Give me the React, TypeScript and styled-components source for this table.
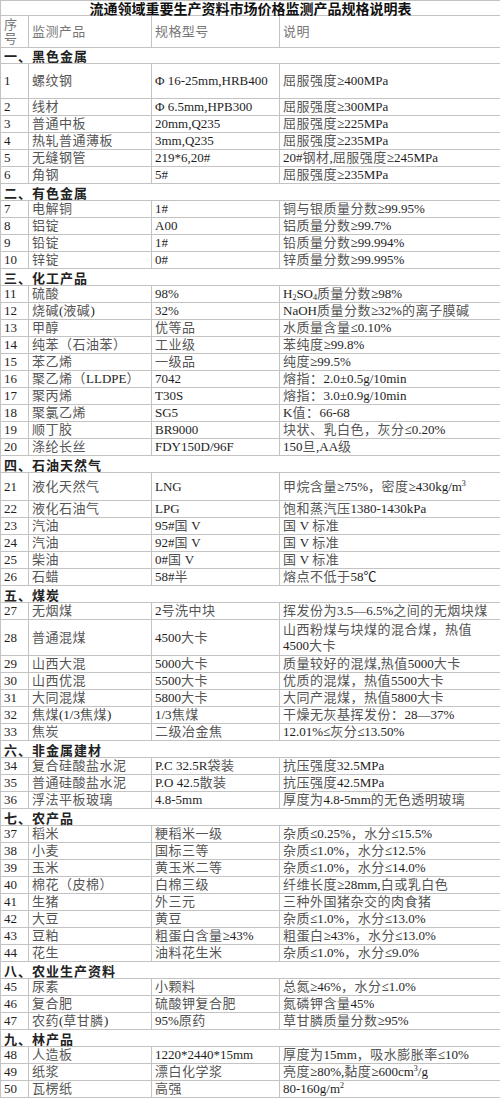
import React, { ReactNode } from 'react';
import styled, { createGlobalStyle } from 'styled-components';

const GlobalStyle = createGlobalStyle`
  html, body {
    margin: 0;
    padding: 0;
    background: #fff;
  }
  body {
    font-family: "Liberation Serif", "Noto Sans CJK SC", serif;
  }
`;

type Section = { section: string };
type Product = { n: number; name: string; spec: ReactNode; desc: ReactNode; h?: number };
type Item = Section | Product;

// CJK runs look lighter and a little more open than the Latin text
const Han = styled.span`
  color: #555;
  letter-spacing: 0.5px;
`;

const Sub = styled.sub`
  font-size: 8px;
  line-height: 0;
  vertical-align: -2px;
`;

const Sup = styled.sup`
  font-size: 8px;
  line-height: 0;
  vertical-align: 5px;
`;

const HAN_RE = /([\u3000-\u303f\u4e00-\u9fff\uff00-\uffef]+)/;

const t = (s: string): ReactNode =>
  s.split(HAN_RE).map((part, i) => (i % 2 === 1 ? <Han key={i}>{part}</Han> : part));

const items: Item[] = [
  { section: '一、黑色金属' },
  { n: 1, name: '螺纹钢', spec: 'Φ 16-25mm,HRB400', desc: '屈服强度≥400MPa', h: 35 },
  { n: 2, name: '线材', spec: 'Φ 6.5mm,HPB300', desc: '屈服强度≥300MPa' },
  { n: 3, name: '普通中板', spec: '20mm,Q235', desc: '屈服强度≥225MPa' },
  { n: 4, name: '热轧普通薄板', spec: '3mm,Q235', desc: '屈服强度≥235MPa' },
  { n: 5, name: '无缝钢管', spec: '219*6,20#', desc: '20#钢材,屈服强度≥245MPa' },
  { n: 6, name: '角钢', spec: '5#', desc: '屈服强度≥235MPa' },
  { section: '二、有色金属' },
  { n: 7, name: '电解铜', spec: '1#', desc: '铜与银质量分数≥99.95%' },
  { n: 8, name: '铝锭', spec: 'A00', desc: '铝质量分数≥99.7%' },
  { n: 9, name: '铅锭', spec: '1#', desc: '铅质量分数≥99.994%' },
  { n: 10, name: '锌锭', spec: '0#', desc: '锌质量分数≥99.995%' },
  { section: '三、化工产品' },
  { n: 11, name: '硫酸', spec: '98%', desc: <>H<Sub>2</Sub>SO<Sub>4</Sub>{t('质量分数≥98%')}</> },
  { n: 12, name: '烧碱(液碱)', spec: '32%', desc: 'NaOH质量分数≥32%的离子膜碱' },
  { n: 13, name: '甲醇', spec: '优等品', desc: '水质量含量≤0.10%' },
  { n: 14, name: '纯苯（石油苯）', spec: '工业级', desc: '苯纯度≥99.8%' },
  { n: 15, name: '苯乙烯', spec: '一级品', desc: '纯度≥99.5%' },
  { n: 16, name: '聚乙烯（LLDPE）', spec: '7042', desc: '熔指：2.0±0.5g/10min' },
  { n: 17, name: '聚丙烯', spec: 'T30S', desc: '熔指：3.0±0.9g/10min' },
  { n: 18, name: '聚氯乙烯', spec: 'SG5', desc: 'K值：66-68' },
  { n: 19, name: '顺丁胶', spec: 'BR9000', desc: '块状、乳白色，灰分≤0.20%' },
  { n: 20, name: '涤纶长丝', spec: 'FDY150D/96F', desc: '150旦,AA级' },
  { section: '四、石油天然气' },
  { n: 21, name: '液化天然气', spec: 'LNG', desc: <>{t('甲烷含量≥75%，密度≥430kg/m')}<Sup>3</Sup></>, h: 28 },
  { n: 22, name: '液化石油气', spec: 'LPG', desc: '饱和蒸汽压1380-1430kPa' },
  { n: 23, name: '汽油', spec: '95#国 V', desc: '国 V 标准' },
  { n: 24, name: '汽油', spec: '92#国 V', desc: '国 V 标准' },
  { n: 25, name: '柴油', spec: '0#国 V', desc: '国 V 标准' },
  { n: 26, name: '石蜡', spec: '58#半', desc: '熔点不低于58℃' },
  { section: '五、煤炭' },
  { n: 27, name: '无烟煤', spec: '2号洗中块', desc: '挥发份为3.5—6.5%之间的无烟块煤' },
  { n: 28, name: '普通混煤', spec: '4500大卡', desc: <>{t('山西粉煤与块煤的混合煤，热值')}<br />{t('4500大卡')}</>, h: 36 },
  { n: 29, name: '山西大混', spec: '5000大卡', desc: '质量较好的混煤,热值5000大卡' },
  { n: 30, name: '山西优混', spec: '5500大卡', desc: '优质的混煤，热值5500大卡' },
  { n: 31, name: '大同混煤', spec: '5800大卡', desc: '大同产混煤，热值5800大卡' },
  { n: 32, name: '焦煤(1/3焦煤)', spec: '1/3焦煤', desc: '干燥无灰基挥发份：28—37%' },
  { n: 33, name: '焦炭', spec: '二级冶金焦', desc: '12.01%≤灰分≤13.50%' },
  { section: '六、非金属建材' },
  { n: 34, name: '复合硅酸盐水泥', spec: 'P.C 32.5R袋装', desc: '抗压强度32.5MPa' },
  { n: 35, name: '普通硅酸盐水泥', spec: 'P.O 42.5散装', desc: '抗压强度42.5MPa' },
  { n: 36, name: '浮法平板玻璃', spec: '4.8-5mm', desc: '厚度为4.8-5mm的无色透明玻璃' },
  { section: '七、农产品' },
  { n: 37, name: '稻米', spec: '粳稻米一级', desc: '杂质≤0.25%，水分≤15.5%' },
  { n: 38, name: '小麦', spec: '国标三等', desc: '杂质≤1.0%，水分≤12.5%' },
  { n: 39, name: '玉米', spec: '黄玉米二等', desc: '杂质≤1.0%，水分≤14.0%' },
  { n: 40, name: '棉花（皮棉）', spec: '白棉三级', desc: '纤维长度≥28mm,白或乳白色' },
  { n: 41, name: '生猪', spec: '外三元', desc: '三种外国猪杂交的肉食猪' },
  { n: 42, name: '大豆', spec: '黄豆', desc: '杂质≤1.0%，水分≤13.0%' },
  { n: 43, name: '豆粕', spec: '粗蛋白含量≥43%', desc: '粗蛋白≥43%，水分≤13.0%' },
  { n: 44, name: '花生', spec: '油料花生米', desc: '杂质≤1.0%，水分≤9.0%' },
  { section: '八、农业生产资料' },
  { n: 45, name: '尿素', spec: '小颗料', desc: '总氮≥46%，水分≤1.0%' },
  { n: 46, name: '复合肥', spec: '硫酸钾复合肥', desc: '氮磷钾含量45%' },
  { n: 47, name: '农药(草甘膦)', spec: '95%原药', desc: '草甘膦质量分数≥95%' },
  { section: '九、林产品' },
  { n: 48, name: '人造板', spec: '1220*2440*15mm', desc: '厚度为15mm，吸水膨胀率≤10%' },
  { n: 49, name: '纸浆', spec: '漂白化学浆', desc: <>{t('亮度≥80%,黏度≥600cm')}<Sup>3</Sup>/g</> },
  { n: 50, name: '瓦楞纸', spec: '高强', desc: <>80-160g/m<Sup>2</Sup></> },
];

const Sheet = styled.table`
  width: 500px;
  border-collapse: collapse;
  table-layout: fixed;
  font-size: 13px;
  color: #1e1e1e;
`;

const Row = styled.tr<{ $h: number }>`
  height: ${(p) => p.$h}px;
`;

const Cell = styled.td`
  border: 1px solid #c3c3c3;
  padding: 0 0 0 3px;
  vertical-align: middle;
  line-height: 16px;
  overflow: hidden;
  white-space: nowrap;
`;

const DescCell = styled(Cell)`
  white-space: normal;
`;

const TitleCell = styled.td`
  border: 1px solid #c3c3c3;
  padding: 0;
  text-align: center;
  font-family: "Noto Sans CJK SC", sans-serif;
  font-weight: 700;
  font-size: 14px;
  line-height: 14px;
  color: #111;
`;

const HeadCell = styled(Cell)`
  line-height: 14px;
  white-space: normal;
  color: #777;
  letter-spacing: 0.4px;
`;

const SectionCell = styled.td`
  border: 1px solid #c3c3c3;
  padding: 0 0 0 3px;
  font-family: "Noto Sans CJK SC", sans-serif;
  font-weight: 700;
  font-size: 13px;
  line-height: 15px;
  letter-spacing: 1px;
  color: #222;
`;

const isSection = (i: Item): i is Section => 'section' in i;

const render = (v: ReactNode) => (typeof v === 'string' ? t(v) : v);

export default function App() {
  return (
    <>
      <GlobalStyle />
      <Sheet>
        <colgroup>
          <col style={{ width: 28 }} />
          <col style={{ width: 123 }} />
          <col style={{ width: 128 }} />
          <col style={{ width: 221 }} />
        </colgroup>
        <tbody>
          <Row $h={15}>
            <TitleCell colSpan={4}>流通领域重要生产资料市场价格监测产品规格说明表</TitleCell>
          </Row>
          <Row $h={32}>
            <HeadCell>序号</HeadCell>
            <HeadCell>监测产品</HeadCell>
            <HeadCell>规格型号</HeadCell>
            <HeadCell>说明</HeadCell>
          </Row>
          {items.map((item) =>
            isSection(item) ? (
              <Row $h={item.section.startsWith('一') ? 15 : 17} key={item.section}>
                <SectionCell colSpan={4}>{item.section}</SectionCell>
              </Row>
            ) : (
              <Row $h={item.h ?? 17} key={item.n}>
                <Cell>{item.n}</Cell>
                <Cell>{render(item.name)}</Cell>
                <Cell>{render(item.spec)}</Cell>
                <DescCell>{render(item.desc)}</DescCell>
              </Row>
            )
          )}
        </tbody>
      </Sheet>
    </>
  );
}
